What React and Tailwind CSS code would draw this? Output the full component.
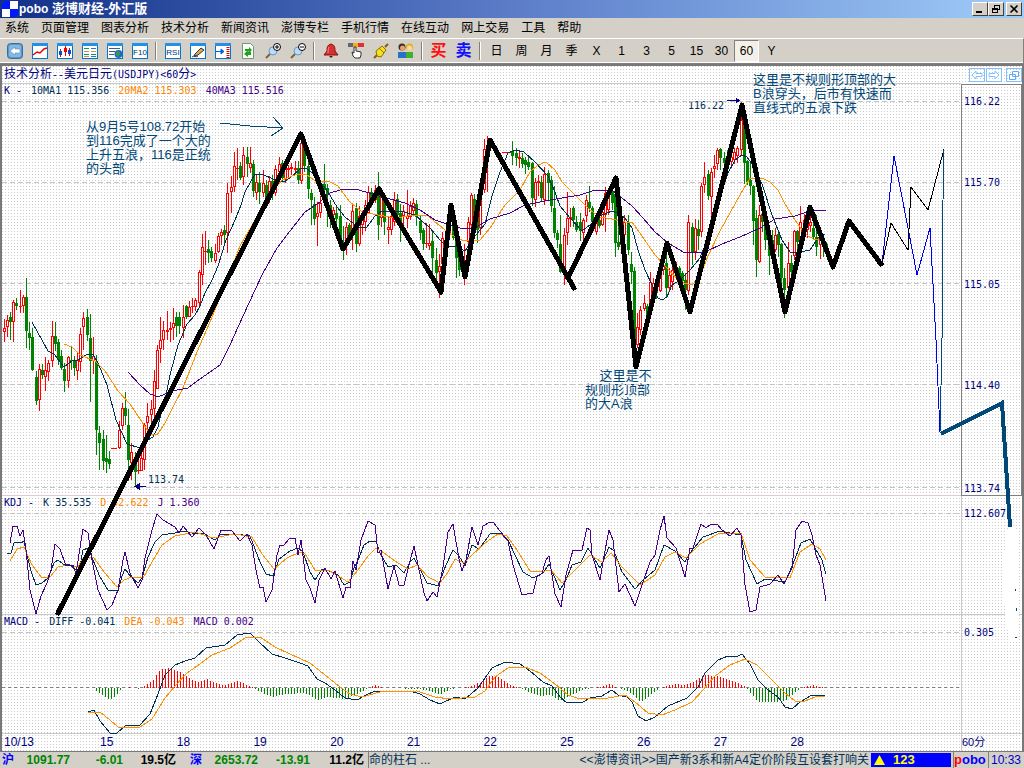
import { clsx } from 'clsx'

const menus = ['系统', '页面管理', '图表分析', '技术分析', '新闻资讯', '澎博专栏', '手机行情', '在线互动', '网上交易', '工具', '帮助']
const periods = ['日', '周', '月', '季', 'X', '1', '3', '5', '15', '30', '60', 'Y']
const days = ['15', '18', '19', '20', '21', '22', '25', '26', '27', '28']

// x high low body-top body-bottom, "r" = up candle, "g" = down candle
const candleData = `4 319 342 328 332 r;7 315 337 320 327 r;10 312 340 317 322 g;13 300 342 302 322 r;16 298 310 303 306 g;20 290 313 306 307 r;23 295 313 297 306 r;26 278 348 297 331 g;29 322 350 333 338 g;32 328 371 337 370 g;36 371 405 377 401 g;39 364 411 369 400 r;42 364 379 370 375 g;45 357 391 370 377 r;48 360 381 363 372 r;52 321 367 336 361 r;55 322 351 336 344 g;58 339 365 342 360 g;61 350 370 356 368 g;64 363 392 369 381 g;68 356 388 357 381 r;71 346 370 360 361 g;74 356 376 361 368 g;77 352 380 360 371 r;80 328 372 334 362 r;83 312 350 318 327 r;87 309 341 317 335 g;90 314 402 338 361 g;93 337 374 356 361 r;96 355 455 361 430 g;99 426 470 433 443 g;103 430 470 439 461 g;106 435 473 458 462 g;109 451 469 459 464 g;112 448 449 448 449 r;115 448 449 448 449 r;119 421 449 430 448 r;122 403 430 408 426 r;125 392 425 408 416 g;128 409 481 425 460 g;131 443 480 452 463 r;135 452 487 459 472 g;138 455 474 470 471 r;141 447 471 458 471 r;144 423 470 425 460 r;147 403 432 416 423 r;151 400 424 409 415 r;154 370 417 381 409 r;157 345 385 350 389 r;160 317 363 340 349 r;163 321 350 330 340 r;167 311 340 330 332 r;170 322 342 328 330 r;173 308 340 323 328 r;176 312 337 317 326 g;179 312 334 317 326 g;183 305 338 317 328 r;186 305 319 306 317 g;189 301 316 307 317 r;192 298 313 306 307 r;195 298 311 300 307 r;199 270 308 272 303 r;202 234 285 247 275 r;205 231 265 251 252 r;208 240 263 249 253 g;211 247 262 251 258 g;215 244 263 253 261 r;218 233 253 236 252 r;221 229 245 232 236 r;224 225 244 230 235 g;227 183 253 193 233 r;231 176 213 187 192 r;234 152 192 166 187 r;237 148 180 168 169 r;240 162 180 166 178 g;243 147 185 155 177 r;247 147 177 157 164 g;250 147 173 163 168 r;253 160 197 164 191 g;256 175 200 182 193 r;259 172 204 183 192 g;263 170 197 183 193 r;266 180 200 185 198 g;269 176 203 181 195 r;272 175 200 181 188 g;275 165 196 169 193 r;279 157 180 164 172 r;282 160 182 163 178 g;285 163 183 166 180 r;288 165 178 168 170 r;291 163 175 167 169 r;295 161 175 168 170 r;298 161 184 168 180 g;301 138 184 143 181 r;304 142 172 148 166 g;308 158 199 166 189 g;311 189 225 193 200 g;314 197 225 204 219 g;317 202 246 213 217 r;320 196 218 203 213 r;324 164 200 184 190 g;327 184 227 188 195 g;330 200 228 205 213 g;333 207 224 210 215 r;336 206 230 213 219 g;340 205 250 216 245 g;343 226 260 243 248 g;346 222 255 227 240 r;349 223 242 225 240 g;352 205 250 211 230 r;356 203 252 208 244 g;359 206 246 216 244 r;362 211 235 217 225 r;365 200 231 205 222 r;368 186 214 192 213 r;371 188 207 192 202 g;375 185 203 190 200 r;378 172 240 187 225 g;381 192 227 197 218 r;384 195 235 200 222 g;388 216 244 227 230 r;391 210 235 216 230 r;394 192 226 200 222 r;397 194 222 199 215 g;400 204 242 213 222 g;403 205 225 211 216 r;407 190 228 216 219 r;410 201 220 206 217 r;413 198 216 203 211 r;416 200 226 204 217 g;420 216 240 221 233 g;423 228 250 230 244 g;426 223 248 243 244 r;429 224 250 243 246 r;432 231 282 241 258 g;436 248 280 260 273 g;439 254 298 266 272 r;442 232 275 238 264 r;446 222 255 230 250 r;449 205 240 210 235 r;453 205 240 215 238 g;456 225 278 235 258 g;459 250 276 256 270 g;464 244 285 262 278 r;468 217 250 222 242 r;471 193 230 195 225 r;474 194 232 199 222 g;477 203 243 215 230 g;480 180 235 186 228 r;484 139 193 149 190 r;487 136 192 148 157 r;503 152 153 152 153 r;506 152 153 152 153 r;509 152 153 152 153 r;512 141 165 151 156 g;516 148 166 153 158 g;519 150 168 157 159 r;522 153 168 158 164 g;525 157 174 160 165 g;528 156 170 162 167 g;532 162 206 163 198 g;535 178 207 182 200 r;538 175 196 181 183 r;541 176 201 182 198 g;544 167 205 174 200 r;548 170 200 173 183 g;551 176 212 180 206 g;554 186 238 208 233 g;557 230 248 233 240 g;560 215 273 244 272 g;564 228 285 235 270 r;567 192 245 218 233 r;570 208 227 217 219 r;573 206 227 208 220 g;576 216 232 222 230 g;580 213 241 222 231 g;583 218 240 220 233 r;586 195 222 200 216 r;589 186 212 202 208 g;592 206 233 208 222 g;596 218 235 222 232 r;599 215 228 220 226 g;602 203 226 212 225 r;605 187 232 193 215 r;608 188 215 194 210 r;612 185 210 192 203 g;615 180 257 194 243 g;618 210 250 242 247 g;621 218 250 222 245 r;624 215 240 222 235 r;628 215 255 222 250 g;631 252 284 264 272 g;634 267 345 271 340 g;637 313 348 327 345 r;640 306 335 310 330 r;644 295 311 303 309 r;647 304 331 306 320 g;650 272 310 282 305 r;653 278 295 283 292 r;656 280 299 284 293 g;660 260 292 271 291 r;663 255 275 265 270 r;666 245 297 263 288 g;669 268 291 275 288 r;672 262 290 270 282 r;676 262 280 268 274 r;679 266 281 268 278 g;682 271 285 273 281 g;685 273 310 280 290 g;688 215 295 222 291 r;692 223 265 227 252 g;695 219 260 228 252 r;698 220 250 229 236 g;701 183 237 186 232 r;704 162 193 177 185 r;708 170 200 174 196 g;711 168 218 172 197 r;714 155 178 166 169 r;717 148 170 150 164 r;720 148 170 149 158 g;724 152 168 158 163 g;727 150 170 158 168 g;731 155 167 157 162 r;734 148 164 152 160 r;737 146 163 148 156 r;741 102 156 120 150 r;744 116 184 121 163 g;747 160 185 161 182 g;750 162 195 180 186 g;753 185 245 186 221 g;756 210 277 218 260 g;759 205 263 215 262 r;762 205 232 214 222 g;765 220 250 226 240 g;769 230 275 238 256 g;772 230 258 240 250 g;775 228 252 235 250 r;778 230 257 234 245 g;781 243 300 244 278 g;784 268 318 278 290 g;788 242 290 263 288 r;791 255 278 263 272 g;794 230 260 231 256 r;797 230 256 231 242 g;800 206 238 222 240 r;804 214 232 220 226 r;807 210 238 215 230 r;810 216 232 222 226 r;813 222 240 228 237 g;816 215 256 237 247 g;820 230 259 235 245 r;823 236 257 240 246 g;826 242 250 244 248 g`

const candles = candleData.split(';').map(row => {
  const [x, high, low, top, bottom, kind] = row.split(' ')
  return { x: +x, high: +high, low: +low, top: +top, bottom: +bottom, down: kind === 'g' }
})

const NAVY = '#003058'
const ORANGE = '#ff9000'
const PURPLE = '#480088'

const thinLines = [
  // moving averages
  [NAVY, '32,322 48,351 54,354 64,367 72,361 78,360 86,355 93,354 98,363 107,385 116,420 127,444 140,448 146,441 153,437 158,427 161,413 165,400 170,375 178,345 187,324 195,315 200,306 205,293 212,280 218,266 226,240 235,220 241,205 245,192 255,174 262,174 275,180 284,182 291,177 300,169 306,168 312,173 320,182 328,192 337,207 345,217 358,227 367,227 375,216 382,211 400,211 415,215 430,228 440,240 446,246 457,247 465,251 472,240 480,230 485,224 492,196 500,172 508,153 515,150 524,152 535,162 548,176 555,192 560,206 570,218 582,231 590,225 600,216 612,211 617,213 625,218 632,228 638,250 645,270 653,287 658,298 662,300 667,297 672,285 680,280 690,270 700,258 707,240 716,208 728,173 735,160 742,155 747,157 753,165 762,184 772,215 782,240 790,252 800,252 810,250 818,238 825,234'],
  [ORANGE, '64,344 72,347 80,355 95,361 105,371 118,391 130,404 142,422 150,434 157,435 165,423 175,403 182,390 190,370 197,352 203,338 210,322 225,285 240,246 255,220 270,195 282,180 295,175 306,174 315,181 330,182 338,186 350,202 362,212 378,215 395,218 415,215 427,215 440,226 452,235 462,240 480,240 490,228 505,205 520,190 530,172 538,165 546,162 555,170 562,182 575,195 590,210 600,217 612,219 625,222 632,222 642,236 655,255 667,268 680,282 692,285 700,276 708,256 720,231 740,195 750,178 762,178 770,182 778,190 785,204 795,220 805,234 815,240 822,238'],
  [PURPLE, '128,372 140,385 150,394 158,397 172,391 188,388 200,379 220,365 230,345 243,316 262,275 277,248 290,231 305,212 320,202 330,193 340,190 356,189 372,194 390,199 405,203 420,210 435,220 450,225 463,229 475,228 490,219 510,213 525,205 550,200 580,195 592,191 612,190 622,198 632,206 643,218 655,232 668,243 685,253 705,252 722,244 740,237 760,228 775,219 795,216 813,210 826,210'],
  // KDJ
  [NAVY, '7,554 11,553 14,543 18,542 21,543 24,541 27,555 31,571 36,585 42,583 48,578 54,563 58,560 63,564 70,565 77,571 80,566 83,550 88,548 93,560 100,577 108,590 118,591 122,576 125,569 131,577 138,583 142,578 148,557 155,542 162,535 175,533 185,531 195,534 203,533 215,540 221,534 235,534 250,536 255,549 260,562 266,574 273,576 279,559 290,551 298,548 303,552 310,572 315,580 322,569 332,572 338,575 344,585 350,582 354,568 358,560 364,545 370,541 376,541 380,553 388,567 396,565 404,573 410,562 414,558 420,569 427,583 435,585 438,586 446,565 453,550 459,556 465,566 472,545 479,549 490,534 500,533 508,540 515,555 523,572 533,578 543,573 549,564 560,590 566,580 572,565 581,562 588,548 600,568 609,547 614,551 622,572 635,589 643,580 655,570 664,545 675,551 685,562 690,553 703,537 720,531 735,534 741,535 746,560 757,584 765,579 785,582 793,564 801,543 810,539 815,548 822,560 826,574'],
  [ORANGE, '10,561 17,549 24,547 32,565 42,578 50,577 58,567 68,565 78,567 84,557 94,558 104,572 117,587 124,580 132,577 143,578 152,562 162,545 175,536 195,532 213,538 235,534 252,537 262,554 274,569 287,558 300,552 305,554 315,570 330,571 348,582 358,570 368,556 376,548 384,553 395,561 408,569 417,565 428,577 440,583 448,572 455,559 464,563 472,555 485,543 498,534 507,536 517,550 530,571 545,571 551,570 562,583 575,570 590,555 602,562 611,553 622,567 640,585 655,575 665,557 675,552 686,558 700,544 718,534 741,533 750,560 765,577 790,578 800,552 812,544 820,549 826,560'],
  [PURPLE, '10,543 13,526 17,526 20,536 23,530 26,550 30,590 36,614 41,596 47,583 51,570 55,544 60,549 66,566 73,565 76,574 79,554 83,529 88,533 92,560 98,590 107,610 112,605 118,590 123,560 125,552 130,573 138,588 142,580 145,558 152,530 157,514 163,520 175,527 179,533 183,526 192,537 199,528 206,535 214,549 221,530 232,531 240,541 247,534 252,545 256,570 260,588 263,587 266,602 272,590 277,555 280,545 284,545 290,538 295,538 298,555 301,540 306,580 310,588 315,603 319,580 325,568 331,579 335,571 343,598 346,587 350,588 353,561 356,570 361,540 368,521 375,525 378,553 381,550 388,589 394,566 399,585 404,585 409,565 414,546 418,565 424,593 427,601 433,592 437,597 443,567 448,532 453,524 459,559 462,571 466,560 472,527 478,545 483,526 490,522 494,523 500,531 508,541 513,565 522,595 533,593 537,577 542,573 546,560 549,556 555,594 561,607 566,575 573,550 582,550 587,528 590,530 592,555 600,580 604,556 609,530 613,540 619,592 625,584 635,606 642,585 650,562 655,555 660,530 664,516 667,538 676,548 681,564 685,577 690,548 693,548 701,524 706,528 711,524 717,524 722,530 730,536 737,528 741,535 745,585 750,612 756,610 760,587 770,584 778,575 784,584 792,568 796,530 802,521 808,523 812,535 816,555 820,565 826,601'],
  // MACD
  [NAVY, '88,712 94,710 100,721 110,733 117,733 126,725 139,726 150,714 158,694 165,675 175,665 185,661 195,658 206,648 225,645 237,635 250,633 258,641 272,654 285,658 300,663 308,666 317,679 325,683 335,690 345,698 357,700 366,695 375,691 390,692 410,691 420,694 430,700 440,704 455,697 465,699 478,688 485,678 492,668 505,662 520,664 530,671 543,682 552,686 560,697 567,703 583,702 590,698 602,696 612,690 618,695 627,697 632,702 638,716 646,721 655,717 668,706 680,701 687,698 698,687 705,673 718,660 728,656 738,656 742,654 750,664 758,680 768,690 778,697 785,707 792,709 800,702 812,695 825,696'],
  [ORANGE, '88,712 100,712 110,720 118,727 140,727 152,719 165,698 175,686 187,673 200,664 212,655 230,648 245,638 260,637 275,647 290,654 310,663 325,675 340,687 350,694 362,697 380,692 417,691 435,697 450,699 475,697 485,691 495,677 508,668 525,667 540,673 555,684 568,695 580,699 608,698 625,695 635,702 648,713 662,715 675,710 692,702 703,690 715,676 730,665 745,659 757,665 775,683 785,693 795,701 805,701 815,697 825,696'],
  // wave forecasts
  ['#0000f0', '882,264 894,156 908,228 917,275 930,228 936,340 940,432'],
  ['#000000', '882,264 891,223 908,250 911,187 928,210 944,149'],
  ['#004878', '944,150 943,200 942,340 940,432'],
  ['#004878', '220,123 250,126 283,128'],
  ['#004878', '273,117 283,128 271,136'],
]

const histogramKnots = [
  [93, 0], [100, -6], [109, -12], [115, -8], [121, -1], [128, 1], [138, -1], [143, 1], [152, 7], [160, 18], [168, 20], [178, 17],
  [190, 9], [198, 6], [206, 9], [215, 5], [224, 3], [236, 7], [250, 2], [254, -1], [262, -5], [272, -9], [285, -6], [305, -5],
  [317, -12], [328, -9], [345, -11], [357, -6], [366, -1], [375, 3], [385, 0], [420, -1], [430, -3], [440, -7], [448, -2], [456, 0],
  [470, 1], [475, 4], [482, 6], [490, 13], [500, 10], [512, 2], [520, 0], [530, -5], [540, -8], [550, -7], [560, -13], [570, -8],
  [582, -2], [600, 1], [610, 4], [617, 0], [625, -2], [632, -6], [640, -14], [648, -9], [656, -2], [665, 2], [675, 4], [685, 3],
  [697, 8], [703, 13], [717, 12], [728, 8], [738, 5], [745, 1], [750, -5], [758, -14], [775, -14], [785, -13], [795, -4], [801, 0],
  [812, 3], [820, 1], [825, 0],
]

const histogram = []
for (let x = 96; x < 825; x += 3) {
  const i = histogramKnots.findIndex(k => k[0] > x)
  const [x0, a] = histogramKnots[i - 1]
  const [x1, b] = histogramKnots[i]
  histogram.push({ x, value: Math.round(a + ((b - a) * (x - x0)) / (x1 - x0)) })
}

const gridRows = [101, 182, 283, 384, 487, 513, 632]

function ChartDrawing() {
  return (
    <svg
      viewBox="2 66 1020 685"
      preserveAspectRatio="none"
      shapeRendering="crispEdges"
      className="pointer-events-none absolute inset-0 h-full w-full"
    >
      {gridRows.map(y => (
        <line key={y} x1="2" x2="961" y1={y + 0.5} y2={y + 0.5} stroke="#c4c4c4" strokeDasharray="5 3" />
      ))}
      <line x1="2" x2="961" y1="687.5" y2="687.5" stroke="#808080" strokeDasharray="3 3" />

      {candles.map(c => (
        <g key={c.x} fill={c.down ? '#008400' : '#ff0000'}>
          <rect x={c.x} y={c.high} width="1" height={c.low - c.high} />
          <rect x={c.x - 1} y={c.top} width="3" height={Math.max(c.bottom - c.top, 1)} />
          {!c.down && c.bottom - c.top > 2 && (
            <rect x={c.x} y={c.top + 1} width="1" height={c.bottom - c.top - 2} fill="#fff" />
          )}
        </g>
      ))}

      {histogram.map(({ x, value }) => (
        <rect
          key={x}
          x={x}
          y={value > 0 ? 688 - value : 688}
          width="1"
          height={Math.abs(value)}
          fill={value > 0 ? '#ff0000' : '#008400'}
        />
      ))}

      {thinLines.map(([color, points], i) => (
        <polyline key={i} points={points} fill="none" stroke={color} />
      ))}

      <g fill="none" stroke="#000" strokeWidth="5" strokeLinecap="round" strokeLinejoin="round">
        <polyline points="58,613 301,134 343,249 379,189 441,292 451,205 465,277 490,140 574,288" />
        <polyline points="568,278 616,178 636,367 667,243 690,312 742,105 785,312 810,207 833,267 849,221 881,264" />
      </g>

      {/* price pointers */}
      <path d="M136 486.500H146M139 484l-4 2.500 4 2.500z" stroke="#000080" fill="#000080" />
      <path d="M727 100.500h11M736 98l3 2.500-3 2.500z" stroke="#000080" fill="#000080" />

      <path d="M1008 527h8l3 20v80l-1 14h-8l-5-26-2-40 2-30z" fill="#fff" />
      <polyline points="941,434 1002,403 1010,527" fill="none" stroke="#004878" strokeWidth="4" />
      <path d="M1015 589h1v2h-1zM1016 608h1v3h-1zM1015 637h2v1h-2z" fill="#004878" />
    </svg>
  )
}

// small framed window shared by most toolbar icons
function Frame({ children }) {
  return (
    <>
      <rect x="0.500" y="0.500" width="15" height="15" fill="#fff" stroke="#0078c8" />
      <rect x="0" y="0" width="16" height="3" fill="#2090e8" />
      {children}
    </>
  )
}

function Magnifier({ plus }) {
  return (
    <>
      <path d="M1 15l5-5" stroke="#806040" strokeWidth="2" />
      <circle cx="8" cy="8" r="4" fill="#b8dcf8" stroke="#6898c0" />
      <circle cx="12" cy="4" r="3.500" fill="#fff" stroke="#000" />
      <path d={plus ? 'M10 4h4M12 2v4' : 'M10 4h4'} stroke="#000" />
    </>
  )
}

const icons = {
  返回: (
    <>
      <rect x="0.500" y="0.500" width="15" height="15" rx="3" fill="#5898d0" stroke="#3070a8" />
      <rect x="2" y="2" width="12" height="12" rx="2" fill="#88b8e0" />
      <path d="M3 8l5-4v2h5v4H8v2z" fill="#fff" stroke="#4880b0" strokeWidth="0.500" />
    </>
  ),
  分时: <Frame><path d="M1 12l4-3 3 1 4-4 3-1" stroke="#f00000" strokeWidth="1.500" fill="none" /></Frame>,
  K线: (
    <Frame>
      <path d="M3.500 6v8M8.500 3v10M12.500 5v8" stroke="#e00000" />
      <path d="M2 8h3v4H2zM11 7h3v4h-3z" fill="#0050d0" />
      <path d="M7 5h3v4H7z" fill="#f00000" />
    </Frame>
  ),
  报价: (
    <Frame>
      <path d="M2 5.500h5M2 11.500h5M9 11.500h5" stroke="#009868" />
      <path d="M2 8.500h5M9 8.500h5M2 13.500h5" stroke="#d89030" />
      <path d="M9 5.500h5M9 13.500h5" stroke="#2070e0" />
    </Frame>
  ),
  资讯: (
    <Frame>
      <path d="M2 5.500h11M2 8.500h6M2 11.500h5" stroke="#406080" />
      <circle cx="11.500" cy="11" r="4" fill="#2068c8" />
      <path d="M9 9l3-1 1 3-2 3-2-2z" fill="#30a048" />
    </Frame>
  ),
  F10: (
    <Frame>
      <text x="8" y="12" textAnchor="middle" fontSize="8" fontFamily="Liberation Sans" fill="#003060">F10</text>
    </Frame>
  ),
  指标: (
    <Frame>
      <text x="8" y="12" textAnchor="middle" fontSize="8" fontFamily="Liberation Sans" fill="#003080">RSI</text>
    </Frame>
  ),
  画线: (
    <Frame>
      <path d="M5 11l6-6 3 2-6 5-4 1z" fill="#e8a830" stroke="#303060" />
      <path d="M2 14c2-2 4 1 6-1" stroke="#303060" fill="none" />
    </Frame>
  ),
  移动: (
    <Frame>
      <path d="M1 8.500h7M6 6l3 2.500L6 11z" fill="#0060e0" stroke="#0060e0" />
      <path d="M13 4v11" stroke="#e00000" strokeWidth="3" strokeDasharray="1 1" />
    </Frame>
  ),
  刷新: (
    <>
      <path d="M2.500.500h8l3 3v12h-11z" fill="#f8fff8" stroke="#709878" />
      <path d="M5 8V6h4V4l3 3-3 3V8zM11 9v3H8v2l-4-3 3-3" fill="#20a020" />
    </>
  ),
  放大: <Magnifier plus />,
  缩小: <Magnifier />,
  预警: (
    <>
      <path d="M8 1c4 1 4 4 4 7l3 4H1l3-4c0-3 0-6 4-7z" fill="#d83030" stroke="#801010" />
      <path d="M6 4c-1 2-1 4-1 6" stroke="#ff9090" fill="none" />
      <path d="M6 13h4l-2 2z" fill="#601010" />
    </>
  ),
  选择: (
    <>
      <path d="M0 0h5v4H0z" fill="#606870" />
      <path d="M5 0h5v4H5z" fill="#f0b020" />
      <path d="M10 0h6v4h-6z" fill="#e03030" />
      <path d="M6 4v6l-2-1 1 4 2 2h5l1-3V9L8 8V4z" fill="#fff" stroke="#303030" />
    </>
  ),
  连接: (
    <>
      <path d="M1 15l3-3M12 4l3-3" stroke="#806000" strokeWidth="2" />
      <path d="M3 8l6-5 4 4-5 7-4-1z" fill="#f8e020" stroke="#907000" />
      <path d="M6 5l5 5" stroke="#907000" />
    </>
  ),
  用户: (
    <>
      <circle cx="4" cy="4" r="3.500" fill="#303030" />
      <circle cx="4.500" cy="5" r="2.500" fill="#f0a060" />
      <path d="M0 9h8v6H0z" fill="#2870c8" />
      <circle cx="11.500" cy="4" r="3.500" fill="#e0b020" />
      <circle cx="11.500" cy="5" r="2.500" fill="#ffd8a0" />
      <path d="M8 9h7v6H8z" fill="#40b030" />
    </>
  ),
}

const iconGroups = [
  ['返回', '分时', 'K线', '报价', '资讯', 'F10'],
  ['指标', '画线', '移动', '刷新', '放大', '缩小'],
  ['预警', '选择', '连接', '用户'],
]

function Separator() {
  return <div className="mx-[3px] h-[18px] w-[2px] shrink-0 border-l border-[#808080] bg-white" />
}

function TitleBar() {
  const buttonClass =
    'flex h-[14px] w-4 items-center justify-center border border-t-white border-l-white border-r-[#404040] border-b-[#404040] bg-[#d4d0c8]'
  return (
    <header className="flex h-[18px] items-center bg-linear-to-r from-[#123088] via-[#5c7cc8] to-[#a0ccf8] pr-[2px] pl-[2px] text-white">
      <svg width="16" height="16" viewBox="0 0 16 16" shapeRendering="crispEdges">
        <path d="M3 0h5v8H0V3z" fill="#0018ff" />
        <path d="M8 0h8v8H8zM0 8h8v8H0z" fill="#fff" />
        <path d="M8 8h8v5l-3 3H8z" fill="#0018ff" />
      </svg>
      <h1 className="ml-px flex-1 text-[13px] leading-[18px] font-bold">
        <span className="text-xs">pobo</span> 澎博财经-外汇版
      </h1>
      <button aria-label="最小化" className={buttonClass}>
        <svg width="10" height="10"><path d="M1 7h6v2H1z" fill="#000" /></svg>
      </button>
      <button aria-label="还原" className={buttonClass}>
        <svg width="10" height="10" shapeRendering="crispEdges" fill="none" stroke="#000">
          <path d="M3.500 4V1.500h5v4H7M3 1h6M1.500 4.500h5v4h-5zM1 5h6" />
        </svg>
      </button>
      <button aria-label="关闭" className={clsx(buttonClass, 'ml-[2px]')}>
        <svg width="10" height="10"><path d="M1.500 1.500l7 7M8.500 1.500l-7 7" stroke="#000" strokeWidth="1.600" /></svg>
      </button>
    </header>
  )
}

function Toolbar() {
  return (
    <div className="flex h-[26px] items-center border-t border-r border-b border-t-white border-r-[#808080] border-b-[#808080] pl-[2px] shadow-[inset_0_-1px_0_#fff]">
      {iconGroups.map((group, i) => (
        <div key={i} className="flex items-center">
          {group.map(name => (
            <button key={name} aria-label={name} className="flex h-[22px] w-[25px] items-center justify-center">
              <svg width="16" height="16" viewBox="0 0 16 16">{icons[name]}</svg>
            </button>
          ))}
          <Separator />
        </div>
      ))}
      <button className="w-[25px] text-base leading-[22px] font-bold text-[#ff1010]">买</button>
      <button className="w-[25px] text-base leading-[22px] font-bold text-[#1010ff]">卖</button>
      <Separator />
      {periods.map(p => (
        <button
          key={p}
          className={clsx(
            'h-[22px] w-[25px] text-xs',
            p === '60' && 'border border-t-[#808080] border-l-[#808080] border-r-white border-b-white bg-[#f4f0e8]',
          )}
        >
          {p}
        </button>
      ))}
    </div>
  )
}

const mono = "font-['DejaVu_Sans_Mono','Noto_Sans_CJK_SC',monospace] text-[10px]"

function Legend({ items }) {
  return (
    <div className={clsx(mono, 'flex gap-[9px] pl-[2px] leading-[14px] whitespace-pre')}>
      {items.map(([text, color]) => <span key={text} className={color}>{text}</span>)}
    </div>
  )
}

const navy = 'text-[#003058]'
const orange = 'text-[#ff8800]'
const purple = 'text-[#480088]'

function Note({ className, lines }) {
  return (
    <div className={clsx('absolute text-[13px] leading-[14px] whitespace-pre text-[#004878]', className)}>
      {lines.map((line, i) => <p key={i} className="h-[14px]">{line}</p>)}
    </div>
  )
}

function ChartWindow() {
  const toolClass = 'flex h-[14px] w-4 items-center justify-center border border-[#80c0ff]'
  const axisClass = clsx(mono, 'w-[61px] shrink-0 pl-[2px] leading-[12px] text-[#000080]')
  return (
    <main className="relative flex min-h-0 flex-1 flex-col border-x-2 border-t-2 border-b border-[#787878] bg-[conic-gradient(at_1px_1px,#fff_75%,#ccc_0)] bg-[size:3px_3px]">
      <div className="flex h-[18px]">
        <h2 className="flex-1 border-b border-[#c8c8c8] pl-[2px] text-xs leading-[17px] text-[#000080]">
          技术分析<span className={mono}>--</span>美元日元<span className={mono}>(USDJPY)&lt;60</span>分<span className={mono}>&gt;</span>
        </h2>
        <div className="flex w-[61px] items-center justify-end">
          <button aria-label="上一个" className={toolClass}>
            <svg width="12" height="10"><path d="M1 5l4-4v2.500h6v3H5V9z" fill="#fff" stroke="#80c0ff" /></svg>
          </button>
          <button aria-label="下一个" className={clsx(toolClass, 'ml-px')}>
            <svg width="12" height="10"><path d="M11 5L7 1v2.500H1v3h6V9z" fill="#fff" stroke="#80c0ff" /></svg>
          </button>
          <button aria-label="还原图表" className={clsx(toolClass, 'ml-1')}>
            <svg width="12" height="11" fill="#fff" stroke="#60a8f8"><path d="M4.500 1.500h6v5h-6zM1.500 4.500h6v5h-6z" /></svg>
          </button>
        </div>
      </div>

      <section className="flex min-h-0 grow-[413] basis-0">
        <div className="flex-1 border-b border-[#e8c8c8]">
          <Legend items={[['K -', 'text-[#000080]'], ['10MA1 115.356', navy], ['20MA2 115.303', orange], ['40MA3 115.516', purple]]} />
        </div>
        <div className={clsx(axisClass, 'flex flex-col border border-[#808080] pt-[11px]')}>
          <span className="grow-[81] basis-0">116.22</span>
          <span className="grow-[101] basis-0">115.70</span>
          <span className="grow-[101] basis-0">115.05</span>
          <span className="grow-[103] basis-0">114.40</span>
          <span>113.74</span>
        </div>
      </section>

      <section className="flex min-h-0 grow-[118] basis-0 border-b border-[#c8c8c8]">
        <div className="flex-1">
          <Legend items={[['KDJ -', 'text-[#000080]'], ['K 35.535', navy], ['D 52.622', orange], ['J 1.360', purple]]} />
        </div>
        <div className={clsx(axisClass, 'border-l border-[#c8c8c8] pt-3')}>112.607</div>
      </section>

      <section className="flex min-h-0 grow-[118] basis-0 border-b border-[#c8c8c8]">
        <div className="flex-1">
          <Legend items={[['MACD -', 'text-[#000080]'], ['DIFF -0.041', navy], ['DEA -0.043', orange], ['MACD 0.002', purple]]} />
        </div>
        <div className={clsx(axisClass, 'border-l border-[#c8c8c8] pt-3')}>0.305</div>
      </section>

      <div className="flex h-[17px] text-xs leading-[17px] text-[#000080]">
        <div className="flex flex-1">
          <span className="w-[98px] pl-[2px]">10/13</span>
          {days.map(d => <span key={d} className="w-[8%]">{d}</span>)}
        </div>
        <span className="w-[61px] border-l border-[#c8c8c8] text-[11px]">60分</span>
      </div>

      <Note
        className="top-[54px] left-[84px]"
        lines={['从9月5号108.72开始', '到116完成了一个大的', '上升五浪，116是正统', '的头部']}
      />
      <Note
        className="top-[7px] left-[751px]"
        lines={['这里是不规则形顶部的大', 'B浪穿头，后市有快速而', '直线式的五浪下跌']}
      />
      <Note
        className="top-[303px] left-[583px]"
        lines={['    这里是不', '规则形顶部', '的大A浪']}
      />
      <span className={clsx(mono, navy, 'absolute top-[33px] left-[686px] leading-[14px]')}>116.22</span>
      <span className={clsx(mono, navy, 'absolute top-[407px] left-[146px] leading-[14px]')}>113.74</span>

      <ChartDrawing />
    </main>
  )
}

function StatusBar() {
  return (
    <footer className="flex h-4 items-center overflow-hidden text-xs leading-4 font-bold whitespace-nowrap">
      <span className="w-[25px] pl-[2px] text-[#0000ff]">沪</span>
      <span className="w-[45px] text-right text-[#008400]">1091.77</span>
      <span className="w-[53px] text-right text-[#008400]">-6.01</span>
      <span className="w-[53px] text-right">19.5亿</span>
      <span className="w-[34px] pl-[14px] text-[#0000ff]">深</span>
      <span className="w-[48px] text-right text-[#008400]">2653.72</span>
      <span className="w-[52px] text-right text-[#008400]">-13.91</span>
      <span className="w-[54px] text-right">11.2亿</span>
      <div className="ml-1 flex min-w-0 flex-1 justify-between overflow-hidden border-l border-[#808080] font-normal text-[#003058]">
        <span>命的柱石 ...</span>
        <span>&lt;&lt;澎博资讯&gt;&gt;国产新3系和新A4定价阶段互设套打响关</span>
      </div>
      <div className="ml-[2px] flex h-[14px] w-[80px] items-center gap-2 bg-[#0000ff] pl-[3px] text-[13px] text-[#ffff00]">
        <svg width="11" height="10"><path d="M5.500 0L11 10H0z" fill="#ffff00" /></svg>
        123
      </div>
      <span className="ml-[2px] w-[35px] border-l border-[#808080] text-[13px] text-[#0000ff]">
        <span className="text-[#ff0000]">p</span>obo
      </span>
      <time className="w-[36px] border-l border-[#808080] pl-[2px] text-xs font-normal text-[#0000c8]">10:33</time>
    </footer>
  )
}

export default function App() {
  return (
    <div className="flex h-screen flex-col bg-[#d4d0c8] font-['Liberation_Sans','Noto_Sans_CJK_SC',sans-serif] text-black">
      <TitleBar />
      <nav className="flex h-5 items-center gap-3 px-[5px] text-xs">
        {menus.map(m => <button key={m}>{m}</button>)}
      </nav>
      <Toolbar />
      <ChartWindow />
      <StatusBar />
    </div>
  )
}
